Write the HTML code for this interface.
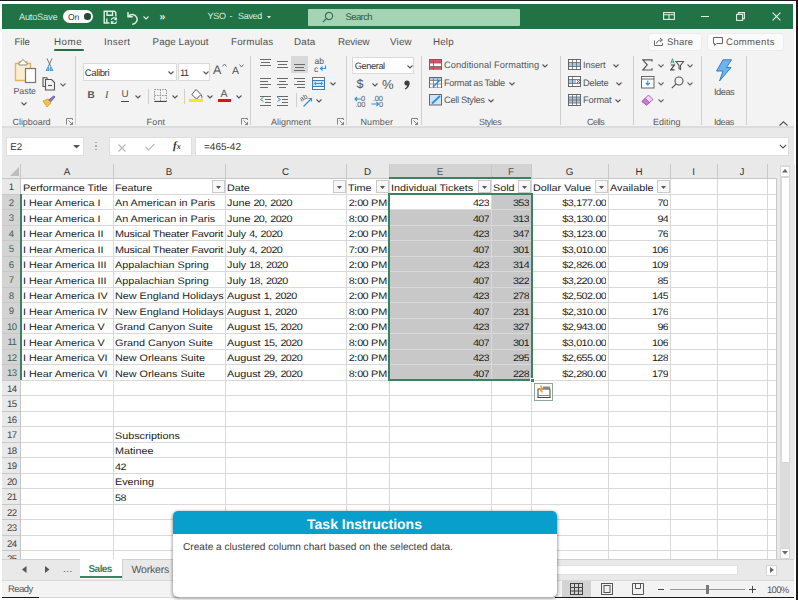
<!DOCTYPE html><html><head><meta charset="utf-8"><style>
*{margin:0;padding:0;box-sizing:border-box}
html,body{width:798px;height:600px;overflow:hidden;background:#fff;font-family:"Liberation Sans",sans-serif;text-rendering:geometricPrecision}
.a{position:absolute}
.t{position:absolute;white-space:nowrap;line-height:1}
.cell{position:absolute;white-space:nowrap;line-height:15px;height:15px;font-size:10.8px;color:#1c1c1c;overflow:hidden;transform:scaleY(0.87);transform-origin:0 11.24px}
.rib{color:#3b3b3b}
</style></head><body>
<div class="a" style="left:0;top:0;width:798px;height:600px;background:#fff"></div>
<div class="a" style="left:2px;top:4px;width:791px;height:25px;background:#217346"></div>
<div class="a" style="left:2px;top:29.5px;width:792px;height:97px;background:#f3f3f3"></div>
<div class="a" style="left:2px;top:126.5px;width:792px;height:38px;background:#e9e9e9"></div>
<div class="a" style="left:2px;top:126px;width:792px;height:1.5px;background:#dcdcdc"></div>
<div class="a" style="left:5.5px;top:136.5px;width:78.5px;height:19px;background:#fff;border:1px solid #dedede"></div>
<div class="t" style="left:10.3px;top:142.5px;font-size:9.8px;color:#333">E2</div>
<svg class="a" style="left:73px;top:144.5px" width="7" height="4"><path d="M0 0H7L3.5 3.5Z" fill="#555"/></svg>
<div class="a" style="left:95px;top:141.5px;width:1.5px;height:1.5px;background:#aaa"></div>
<div class="a" style="left:95px;top:145.0px;width:1.5px;height:1.5px;background:#aaa"></div>
<div class="a" style="left:95px;top:148.5px;width:1.5px;height:1.5px;background:#aaa"></div>
<div class="a" style="left:108.5px;top:136.5px;width:83.5px;height:19px;background:#fff;border:1px solid #dedede"></div>
<svg class="a" style="left:118px;top:143.5px" width="8" height="8"><path d="M0.5 0.5L7.5 7.5M7.5 0.5L0.5 7.5" stroke="#b5b5b5" stroke-width="1.1"/></svg>
<svg class="a" style="left:145px;top:143px" width="10" height="8"><path d="M0.5 4L3.5 7L9.5 0.8" fill="none" stroke="#b5b5b5" stroke-width="1.1"/></svg>
<div class="t" style="left:173px;top:140.5px;font-size:11px;color:#333;font-family:&quot;Liberation Serif&quot;;font-style:italic;font-weight:bold">f<span style="font-size:8px">x</span></div>
<div class="a" style="left:195px;top:136.5px;width:594px;height:19px;background:#fff;border:1px solid #dedede"></div>
<div class="t" style="left:204px;top:142.5px;font-size:10px;color:#333;letter-spacing:0px">=465-42</div>
<svg class="a" style="left:779px;top:143.5px" width="8" height="5"><path d="M0.8 0.8L4 4L7.2 0.8" fill="none" stroke="#555" stroke-width="1.2"/></svg>
<div class="a" style="left:2px;top:164px;width:775px;height:14.5px;background:#e9e9e9"></div>
<div class="a" style="left:2px;top:178.5px;width:19px;height:380.5px;background:#e9e9e9"></div>
<div class="a" style="left:2px;top:194.0px;width:19px;height:186.0px;background:#d3d3d3"></div>
<div class="a" style="left:389px;top:164px;width:142px;height:14.5px;background:#d3d3d3"></div>
<div class="a" style="left:21px;top:178.5px;width:756px;height:380.5px;background:#fff"></div>
<div class="a" style="left:389px;top:194.0px;width:142px;height:186.0px;background:#c8c8c8"></div>
<div class="a" style="left:389px;top:194.0px;width:102px;height:15.5px;background:#fff"></div>
<div class="a" style="left:21px;top:193.5px;width:756px;height:1px;background:#d9d9d9"></div>
<div class="a" style="left:2px;top:193.5px;width:19px;height:1px;background:#c8c8c8"></div>
<div class="a" style="left:21px;top:209.0px;width:756px;height:1px;background:#d9d9d9"></div>
<div class="a" style="left:2px;top:209.0px;width:19px;height:1px;background:#c8c8c8"></div>
<div class="a" style="left:21px;top:224.5px;width:756px;height:1px;background:#d9d9d9"></div>
<div class="a" style="left:2px;top:224.5px;width:19px;height:1px;background:#c8c8c8"></div>
<div class="a" style="left:21px;top:240.0px;width:756px;height:1px;background:#d9d9d9"></div>
<div class="a" style="left:2px;top:240.0px;width:19px;height:1px;background:#c8c8c8"></div>
<div class="a" style="left:21px;top:255.5px;width:756px;height:1px;background:#d9d9d9"></div>
<div class="a" style="left:2px;top:255.5px;width:19px;height:1px;background:#c8c8c8"></div>
<div class="a" style="left:21px;top:271.0px;width:756px;height:1px;background:#d9d9d9"></div>
<div class="a" style="left:2px;top:271.0px;width:19px;height:1px;background:#c8c8c8"></div>
<div class="a" style="left:21px;top:286.5px;width:756px;height:1px;background:#d9d9d9"></div>
<div class="a" style="left:2px;top:286.5px;width:19px;height:1px;background:#c8c8c8"></div>
<div class="a" style="left:21px;top:302.0px;width:756px;height:1px;background:#d9d9d9"></div>
<div class="a" style="left:2px;top:302.0px;width:19px;height:1px;background:#c8c8c8"></div>
<div class="a" style="left:21px;top:317.5px;width:756px;height:1px;background:#d9d9d9"></div>
<div class="a" style="left:2px;top:317.5px;width:19px;height:1px;background:#c8c8c8"></div>
<div class="a" style="left:21px;top:333.0px;width:756px;height:1px;background:#d9d9d9"></div>
<div class="a" style="left:2px;top:333.0px;width:19px;height:1px;background:#c8c8c8"></div>
<div class="a" style="left:21px;top:348.5px;width:756px;height:1px;background:#d9d9d9"></div>
<div class="a" style="left:2px;top:348.5px;width:19px;height:1px;background:#c8c8c8"></div>
<div class="a" style="left:21px;top:364.0px;width:756px;height:1px;background:#d9d9d9"></div>
<div class="a" style="left:2px;top:364.0px;width:19px;height:1px;background:#c8c8c8"></div>
<div class="a" style="left:21px;top:379.5px;width:756px;height:1px;background:#d9d9d9"></div>
<div class="a" style="left:2px;top:379.5px;width:19px;height:1px;background:#c8c8c8"></div>
<div class="a" style="left:21px;top:395.0px;width:756px;height:1px;background:#d9d9d9"></div>
<div class="a" style="left:2px;top:395.0px;width:19px;height:1px;background:#c8c8c8"></div>
<div class="a" style="left:21px;top:410.5px;width:756px;height:1px;background:#d9d9d9"></div>
<div class="a" style="left:2px;top:410.5px;width:19px;height:1px;background:#c8c8c8"></div>
<div class="a" style="left:21px;top:426.0px;width:756px;height:1px;background:#d9d9d9"></div>
<div class="a" style="left:2px;top:426.0px;width:19px;height:1px;background:#c8c8c8"></div>
<div class="a" style="left:21px;top:441.5px;width:756px;height:1px;background:#d9d9d9"></div>
<div class="a" style="left:2px;top:441.5px;width:19px;height:1px;background:#c8c8c8"></div>
<div class="a" style="left:21px;top:457.0px;width:756px;height:1px;background:#d9d9d9"></div>
<div class="a" style="left:2px;top:457.0px;width:19px;height:1px;background:#c8c8c8"></div>
<div class="a" style="left:21px;top:472.5px;width:756px;height:1px;background:#d9d9d9"></div>
<div class="a" style="left:2px;top:472.5px;width:19px;height:1px;background:#c8c8c8"></div>
<div class="a" style="left:21px;top:488.0px;width:756px;height:1px;background:#d9d9d9"></div>
<div class="a" style="left:2px;top:488.0px;width:19px;height:1px;background:#c8c8c8"></div>
<div class="a" style="left:21px;top:503.5px;width:756px;height:1px;background:#d9d9d9"></div>
<div class="a" style="left:2px;top:503.5px;width:19px;height:1px;background:#c8c8c8"></div>
<div class="a" style="left:21px;top:519.0px;width:756px;height:1px;background:#d9d9d9"></div>
<div class="a" style="left:2px;top:519.0px;width:19px;height:1px;background:#c8c8c8"></div>
<div class="a" style="left:21px;top:534.5px;width:756px;height:1px;background:#d9d9d9"></div>
<div class="a" style="left:2px;top:534.5px;width:19px;height:1px;background:#c8c8c8"></div>
<div class="a" style="left:21px;top:550.0px;width:756px;height:1px;background:#d9d9d9"></div>
<div class="a" style="left:2px;top:550.0px;width:19px;height:1px;background:#c8c8c8"></div>
<div class="a" style="left:112.5px;top:178.5px;width:1px;height:380.5px;background:#d9d9d9"></div>
<div class="a" style="left:112.5px;top:164px;width:1px;height:14.5px;background:#c8c8c8"></div>
<div class="a" style="left:224.5px;top:178.5px;width:1px;height:380.5px;background:#d9d9d9"></div>
<div class="a" style="left:224.5px;top:164px;width:1px;height:14.5px;background:#c8c8c8"></div>
<div class="a" style="left:345.5px;top:178.5px;width:1px;height:380.5px;background:#d9d9d9"></div>
<div class="a" style="left:345.5px;top:164px;width:1px;height:14.5px;background:#c8c8c8"></div>
<div class="a" style="left:388.5px;top:178.5px;width:1px;height:380.5px;background:#d9d9d9"></div>
<div class="a" style="left:388.5px;top:164px;width:1px;height:14.5px;background:#c8c8c8"></div>
<div class="a" style="left:490.5px;top:178.5px;width:1px;height:380.5px;background:#d9d9d9"></div>
<div class="a" style="left:490.5px;top:164px;width:1px;height:14.5px;background:#c8c8c8"></div>
<div class="a" style="left:530.5px;top:178.5px;width:1px;height:380.5px;background:#d9d9d9"></div>
<div class="a" style="left:530.5px;top:164px;width:1px;height:14.5px;background:#c8c8c8"></div>
<div class="a" style="left:607.5px;top:178.5px;width:1px;height:380.5px;background:#d9d9d9"></div>
<div class="a" style="left:607.5px;top:164px;width:1px;height:14.5px;background:#c8c8c8"></div>
<div class="a" style="left:669.5px;top:178.5px;width:1px;height:380.5px;background:#d9d9d9"></div>
<div class="a" style="left:669.5px;top:164px;width:1px;height:14.5px;background:#c8c8c8"></div>
<div class="a" style="left:716.5px;top:178.5px;width:1px;height:380.5px;background:#d9d9d9"></div>
<div class="a" style="left:716.5px;top:164px;width:1px;height:14.5px;background:#c8c8c8"></div>
<div class="a" style="left:766.5px;top:178.5px;width:1px;height:380.5px;background:#d9d9d9"></div>
<div class="a" style="left:766.5px;top:164px;width:1px;height:14.5px;background:#c8c8c8"></div>
<div class="a" style="left:2px;top:177.5px;width:775px;height:1.5px;background:#c6c6c6"></div>
<div class="a" style="left:389px;top:177px;width:142px;height:2px;background:#3a8360"></div>
<div class="a" style="left:20px;top:164px;width:1px;height:395px;background:#c6c6c6"></div>
<div class="a" style="left:20px;top:194.0px;width:1.5px;height:186.0px;background:#3a8360"></div>
<svg class="a" style="left:9px;top:167px" width="11" height="10"><path d="M10 0 L10 9 L1 9 Z" fill="#bdbdbd"/></svg>
<div class="t" style="left:21px;width:92px;top:167.5px;font-size:9.8px;text-align:center;color:#333;font-weight:normal">A</div>
<div class="t" style="left:113px;width:112px;top:167.5px;font-size:9.8px;text-align:center;color:#333;font-weight:normal">B</div>
<div class="t" style="left:225px;width:121px;top:167.5px;font-size:9.8px;text-align:center;color:#333;font-weight:normal">C</div>
<div class="t" style="left:346px;width:43px;top:167.5px;font-size:9.8px;text-align:center;color:#333;font-weight:normal">D</div>
<div class="t" style="left:389px;width:102px;top:167.5px;font-size:9.8px;text-align:center;color:#555;font-weight:normal">E</div>
<div class="t" style="left:491px;width:40px;top:167.5px;font-size:9.8px;text-align:center;color:#555;font-weight:normal">F</div>
<div class="t" style="left:531px;width:77px;top:167.5px;font-size:9.8px;text-align:center;color:#333;font-weight:normal">G</div>
<div class="t" style="left:608px;width:62px;top:167.5px;font-size:9.8px;text-align:center;color:#333;font-weight:normal">H</div>
<div class="t" style="left:670px;width:47px;top:167.5px;font-size:9.8px;text-align:center;color:#333;font-weight:normal">I</div>
<div class="t" style="left:717px;width:50px;top:167.5px;font-size:9.8px;text-align:center;color:#333;font-weight:normal">J</div>
<div class="t" style="left:767px;width:33px;top:167.5px;font-size:9.8px;text-align:center;color:#333;font-weight:normal">K</div>
<div class="t" style="left:2px;width:19px;top:183.3px;font-size:9.6px;text-align:center;color:#444;overflow:hidden;height:12px;letter-spacing:0px;text-indent:0px">1</div>
<div class="t" style="left:2px;width:19px;top:198.8px;font-size:9.6px;text-align:center;color:#3f5f4c;overflow:hidden;height:12px;letter-spacing:0px;text-indent:0px">2</div>
<div class="t" style="left:2px;width:19px;top:214.3px;font-size:9.6px;text-align:center;color:#3f5f4c;overflow:hidden;height:12px;letter-spacing:0px;text-indent:0px">3</div>
<div class="t" style="left:2px;width:19px;top:229.8px;font-size:9.6px;text-align:center;color:#3f5f4c;overflow:hidden;height:12px;letter-spacing:0px;text-indent:0px">4</div>
<div class="t" style="left:2px;width:19px;top:245.3px;font-size:9.6px;text-align:center;color:#3f5f4c;overflow:hidden;height:12px;letter-spacing:0px;text-indent:0px">5</div>
<div class="t" style="left:2px;width:19px;top:260.8px;font-size:9.6px;text-align:center;color:#3f5f4c;overflow:hidden;height:12px;letter-spacing:0px;text-indent:0px">6</div>
<div class="t" style="left:2px;width:19px;top:276.3px;font-size:9.6px;text-align:center;color:#3f5f4c;overflow:hidden;height:12px;letter-spacing:0px;text-indent:0px">7</div>
<div class="t" style="left:2px;width:19px;top:291.8px;font-size:9.6px;text-align:center;color:#3f5f4c;overflow:hidden;height:12px;letter-spacing:0px;text-indent:0px">8</div>
<div class="t" style="left:2px;width:19px;top:307.3px;font-size:9.6px;text-align:center;color:#3f5f4c;overflow:hidden;height:12px;letter-spacing:0px;text-indent:0px">9</div>
<div class="t" style="left:2px;width:19px;top:322.8px;font-size:9.6px;text-align:center;color:#3f5f4c;overflow:hidden;height:12px;letter-spacing:-0.6px;text-indent:0.6px">10</div>
<div class="t" style="left:2px;width:19px;top:338.3px;font-size:9.6px;text-align:center;color:#3f5f4c;overflow:hidden;height:12px;letter-spacing:-0.6px;text-indent:0.6px">11</div>
<div class="t" style="left:2px;width:19px;top:353.8px;font-size:9.6px;text-align:center;color:#3f5f4c;overflow:hidden;height:12px;letter-spacing:-0.6px;text-indent:0.6px">12</div>
<div class="t" style="left:2px;width:19px;top:369.3px;font-size:9.6px;text-align:center;color:#3f5f4c;overflow:hidden;height:12px;letter-spacing:-0.6px;text-indent:0.6px">13</div>
<div class="t" style="left:2px;width:19px;top:384.8px;font-size:9.6px;text-align:center;color:#444;overflow:hidden;height:12px;letter-spacing:-0.6px;text-indent:0.6px">14</div>
<div class="t" style="left:2px;width:19px;top:400.3px;font-size:9.6px;text-align:center;color:#444;overflow:hidden;height:12px;letter-spacing:-0.6px;text-indent:0.6px">15</div>
<div class="t" style="left:2px;width:19px;top:415.8px;font-size:9.6px;text-align:center;color:#444;overflow:hidden;height:12px;letter-spacing:-0.6px;text-indent:0.6px">16</div>
<div class="t" style="left:2px;width:19px;top:431.3px;font-size:9.6px;text-align:center;color:#444;overflow:hidden;height:12px;letter-spacing:-0.6px;text-indent:0.6px">17</div>
<div class="t" style="left:2px;width:19px;top:446.8px;font-size:9.6px;text-align:center;color:#444;overflow:hidden;height:12px;letter-spacing:-0.6px;text-indent:0.6px">18</div>
<div class="t" style="left:2px;width:19px;top:462.3px;font-size:9.6px;text-align:center;color:#444;overflow:hidden;height:12px;letter-spacing:-0.6px;text-indent:0.6px">19</div>
<div class="t" style="left:2px;width:19px;top:477.8px;font-size:9.6px;text-align:center;color:#444;overflow:hidden;height:12px;letter-spacing:-0.6px;text-indent:0.6px">20</div>
<div class="t" style="left:2px;width:19px;top:493.3px;font-size:9.6px;text-align:center;color:#444;overflow:hidden;height:12px;letter-spacing:-0.6px;text-indent:0.6px">21</div>
<div class="t" style="left:2px;width:19px;top:508.8px;font-size:9.6px;text-align:center;color:#444;overflow:hidden;height:12px;letter-spacing:-0.6px;text-indent:0.6px">22</div>
<div class="t" style="left:2px;width:19px;top:524.3px;font-size:9.6px;text-align:center;color:#444;overflow:hidden;height:12px;letter-spacing:-0.6px;text-indent:0.6px">23</div>
<div class="t" style="left:2px;width:19px;top:539.8px;font-size:9.6px;text-align:center;color:#444;overflow:hidden;height:12px;letter-spacing:-0.6px;text-indent:0.6px">24</div>
<div class="t" style="left:2px;width:19px;top:555.3px;font-size:9.6px;text-align:center;color:#444;overflow:hidden;height:3.7px;letter-spacing:-0.6px;text-indent:0.6px">25</div>
<div class="cell" style="left:23px;width:89.5px;top:180.6px">Performance Title</div>
<div class="cell" style="left:115px;width:109.5px;top:180.6px">Feature</div>
<div class="cell" style="left:227px;width:118.5px;top:180.6px">Date</div>
<div class="cell" style="left:348px;width:40.5px;top:180.6px">Time</div>
<div class="cell" style="left:391px;width:99.5px;top:180.6px">Individual Tickets</div>
<div class="cell" style="left:493px;width:37.5px;top:180.6px">Sold</div>
<div class="cell" style="left:533px;width:74.5px;top:180.6px">Dollar Value</div>
<div class="cell" style="left:610px;width:59.5px;top:180.6px">Available</div>
<div class="cell" style="left:23px;width:89.5px;top:196.1px">I Hear America I</div>
<div class="cell" style="left:115px;width:109.5px;top:196.1px">An American in Paris</div>
<div class="cell" style="left:227px;width:118.5px;top:196.1px">June <span style="letter-spacing:-0.6px">20</span>, <span style="letter-spacing:-0.6px">2020</span></div>
<div class="cell" style="left:346px;width:41.2px;top:196.1px;text-align:right"><span style="letter-spacing:-0.6px">2</span>:<span style="letter-spacing:-0.6px">00</span> PM</div>
<div class="cell" style="left:389px;width:100.2px;top:196.1px;text-align:right"><span style="letter-spacing:-0.6px">423</span></div>
<div class="cell" style="left:491px;width:38.2px;top:196.1px;text-align:right"><span style="letter-spacing:-0.6px">353</span></div>
<div class="cell" style="left:531px;width:75.2px;top:196.1px;text-align:right"><span style="letter-spacing:-0.6px">$3</span>,<span style="letter-spacing:-0.6px">177</span>.<span style="letter-spacing:-0.6px">00</span></div>
<div class="cell" style="left:608px;width:60.2px;top:196.1px;text-align:right"><span style="letter-spacing:-0.6px">70</span></div>
<div class="cell" style="left:23px;width:89.5px;top:211.6px">I Hear America I</div>
<div class="cell" style="left:115px;width:109.5px;top:211.6px">An American in Paris</div>
<div class="cell" style="left:227px;width:118.5px;top:211.6px">June <span style="letter-spacing:-0.6px">20</span>, <span style="letter-spacing:-0.6px">2020</span></div>
<div class="cell" style="left:346px;width:41.2px;top:211.6px;text-align:right"><span style="letter-spacing:-0.6px">8</span>:<span style="letter-spacing:-0.6px">00</span> PM</div>
<div class="cell" style="left:389px;width:100.2px;top:211.6px;text-align:right"><span style="letter-spacing:-0.6px">407</span></div>
<div class="cell" style="left:491px;width:38.2px;top:211.6px;text-align:right"><span style="letter-spacing:-0.6px">313</span></div>
<div class="cell" style="left:531px;width:75.2px;top:211.6px;text-align:right"><span style="letter-spacing:-0.6px">$3</span>,<span style="letter-spacing:-0.6px">130</span>.<span style="letter-spacing:-0.6px">00</span></div>
<div class="cell" style="left:608px;width:60.2px;top:211.6px;text-align:right"><span style="letter-spacing:-0.6px">94</span></div>
<div class="cell" style="left:23px;width:89.5px;top:227.1px">I Hear America II</div>
<div class="cell" style="left:115px;width:109.5px;top:227.1px"><span style="letter-spacing:-0.2px">Musical Theater Favorit</span></div>
<div class="cell" style="left:227px;width:118.5px;top:227.1px">July <span style="letter-spacing:-0.6px">4</span>, <span style="letter-spacing:-0.6px">2020</span></div>
<div class="cell" style="left:346px;width:41.2px;top:227.1px;text-align:right"><span style="letter-spacing:-0.6px">2</span>:<span style="letter-spacing:-0.6px">00</span> PM</div>
<div class="cell" style="left:389px;width:100.2px;top:227.1px;text-align:right"><span style="letter-spacing:-0.6px">423</span></div>
<div class="cell" style="left:491px;width:38.2px;top:227.1px;text-align:right"><span style="letter-spacing:-0.6px">347</span></div>
<div class="cell" style="left:531px;width:75.2px;top:227.1px;text-align:right"><span style="letter-spacing:-0.6px">$3</span>,<span style="letter-spacing:-0.6px">123</span>.<span style="letter-spacing:-0.6px">00</span></div>
<div class="cell" style="left:608px;width:60.2px;top:227.1px;text-align:right"><span style="letter-spacing:-0.6px">76</span></div>
<div class="cell" style="left:23px;width:89.5px;top:242.6px">I Hear America II</div>
<div class="cell" style="left:115px;width:109.5px;top:242.6px"><span style="letter-spacing:-0.2px">Musical Theater Favorit</span></div>
<div class="cell" style="left:227px;width:118.5px;top:242.6px">July <span style="letter-spacing:-0.6px">4</span>, <span style="letter-spacing:-0.6px">2020</span></div>
<div class="cell" style="left:346px;width:41.2px;top:242.6px;text-align:right"><span style="letter-spacing:-0.6px">7</span>:<span style="letter-spacing:-0.6px">00</span> PM</div>
<div class="cell" style="left:389px;width:100.2px;top:242.6px;text-align:right"><span style="letter-spacing:-0.6px">407</span></div>
<div class="cell" style="left:491px;width:38.2px;top:242.6px;text-align:right"><span style="letter-spacing:-0.6px">301</span></div>
<div class="cell" style="left:531px;width:75.2px;top:242.6px;text-align:right"><span style="letter-spacing:-0.6px">$3</span>,<span style="letter-spacing:-0.6px">010</span>.<span style="letter-spacing:-0.6px">00</span></div>
<div class="cell" style="left:608px;width:60.2px;top:242.6px;text-align:right"><span style="letter-spacing:-0.6px">106</span></div>
<div class="cell" style="left:23px;width:89.5px;top:258.1px">I Hear America III</div>
<div class="cell" style="left:115px;width:109.5px;top:258.1px">Appalachian Spring</div>
<div class="cell" style="left:227px;width:118.5px;top:258.1px">July <span style="letter-spacing:-0.6px">18</span>, <span style="letter-spacing:-0.6px">2020</span></div>
<div class="cell" style="left:346px;width:41.2px;top:258.1px;text-align:right"><span style="letter-spacing:-0.6px">2</span>:<span style="letter-spacing:-0.6px">00</span> PM</div>
<div class="cell" style="left:389px;width:100.2px;top:258.1px;text-align:right"><span style="letter-spacing:-0.6px">423</span></div>
<div class="cell" style="left:491px;width:38.2px;top:258.1px;text-align:right"><span style="letter-spacing:-0.6px">314</span></div>
<div class="cell" style="left:531px;width:75.2px;top:258.1px;text-align:right"><span style="letter-spacing:-0.6px">$2</span>,<span style="letter-spacing:-0.6px">826</span>.<span style="letter-spacing:-0.6px">00</span></div>
<div class="cell" style="left:608px;width:60.2px;top:258.1px;text-align:right"><span style="letter-spacing:-0.6px">109</span></div>
<div class="cell" style="left:23px;width:89.5px;top:273.6px">I Hear America III</div>
<div class="cell" style="left:115px;width:109.5px;top:273.6px">Appalachian Spring</div>
<div class="cell" style="left:227px;width:118.5px;top:273.6px">July <span style="letter-spacing:-0.6px">18</span>, <span style="letter-spacing:-0.6px">2020</span></div>
<div class="cell" style="left:346px;width:41.2px;top:273.6px;text-align:right"><span style="letter-spacing:-0.6px">8</span>:<span style="letter-spacing:-0.6px">00</span> PM</div>
<div class="cell" style="left:389px;width:100.2px;top:273.6px;text-align:right"><span style="letter-spacing:-0.6px">407</span></div>
<div class="cell" style="left:491px;width:38.2px;top:273.6px;text-align:right"><span style="letter-spacing:-0.6px">322</span></div>
<div class="cell" style="left:531px;width:75.2px;top:273.6px;text-align:right"><span style="letter-spacing:-0.6px">$3</span>,<span style="letter-spacing:-0.6px">220</span>.<span style="letter-spacing:-0.6px">00</span></div>
<div class="cell" style="left:608px;width:60.2px;top:273.6px;text-align:right"><span style="letter-spacing:-0.6px">85</span></div>
<div class="cell" style="left:23px;width:89.5px;top:289.1px">I Hear America IV</div>
<div class="cell" style="left:115px;width:109.5px;top:289.1px">New England Holidays</div>
<div class="cell" style="left:227px;width:118.5px;top:289.1px">August <span style="letter-spacing:-0.6px">1</span>, <span style="letter-spacing:-0.6px">2020</span></div>
<div class="cell" style="left:346px;width:41.2px;top:289.1px;text-align:right"><span style="letter-spacing:-0.6px">2</span>:<span style="letter-spacing:-0.6px">00</span> PM</div>
<div class="cell" style="left:389px;width:100.2px;top:289.1px;text-align:right"><span style="letter-spacing:-0.6px">423</span></div>
<div class="cell" style="left:491px;width:38.2px;top:289.1px;text-align:right"><span style="letter-spacing:-0.6px">278</span></div>
<div class="cell" style="left:531px;width:75.2px;top:289.1px;text-align:right"><span style="letter-spacing:-0.6px">$2</span>,<span style="letter-spacing:-0.6px">502</span>.<span style="letter-spacing:-0.6px">00</span></div>
<div class="cell" style="left:608px;width:60.2px;top:289.1px;text-align:right"><span style="letter-spacing:-0.6px">145</span></div>
<div class="cell" style="left:23px;width:89.5px;top:304.6px">I Hear America IV</div>
<div class="cell" style="left:115px;width:109.5px;top:304.6px">New England Holidays</div>
<div class="cell" style="left:227px;width:118.5px;top:304.6px">August <span style="letter-spacing:-0.6px">1</span>, <span style="letter-spacing:-0.6px">2020</span></div>
<div class="cell" style="left:346px;width:41.2px;top:304.6px;text-align:right"><span style="letter-spacing:-0.6px">8</span>:<span style="letter-spacing:-0.6px">00</span> PM</div>
<div class="cell" style="left:389px;width:100.2px;top:304.6px;text-align:right"><span style="letter-spacing:-0.6px">407</span></div>
<div class="cell" style="left:491px;width:38.2px;top:304.6px;text-align:right"><span style="letter-spacing:-0.6px">231</span></div>
<div class="cell" style="left:531px;width:75.2px;top:304.6px;text-align:right"><span style="letter-spacing:-0.6px">$2</span>,<span style="letter-spacing:-0.6px">310</span>.<span style="letter-spacing:-0.6px">00</span></div>
<div class="cell" style="left:608px;width:60.2px;top:304.6px;text-align:right"><span style="letter-spacing:-0.6px">176</span></div>
<div class="cell" style="left:23px;width:89.5px;top:320.1px">I Hear America V</div>
<div class="cell" style="left:115px;width:109.5px;top:320.1px">Grand Canyon Suite</div>
<div class="cell" style="left:227px;width:118.5px;top:320.1px">August <span style="letter-spacing:-0.6px">15</span>, <span style="letter-spacing:-0.6px">2020</span></div>
<div class="cell" style="left:346px;width:41.2px;top:320.1px;text-align:right"><span style="letter-spacing:-0.6px">2</span>:<span style="letter-spacing:-0.6px">00</span> PM</div>
<div class="cell" style="left:389px;width:100.2px;top:320.1px;text-align:right"><span style="letter-spacing:-0.6px">423</span></div>
<div class="cell" style="left:491px;width:38.2px;top:320.1px;text-align:right"><span style="letter-spacing:-0.6px">327</span></div>
<div class="cell" style="left:531px;width:75.2px;top:320.1px;text-align:right"><span style="letter-spacing:-0.6px">$2</span>,<span style="letter-spacing:-0.6px">943</span>.<span style="letter-spacing:-0.6px">00</span></div>
<div class="cell" style="left:608px;width:60.2px;top:320.1px;text-align:right"><span style="letter-spacing:-0.6px">96</span></div>
<div class="cell" style="left:23px;width:89.5px;top:335.6px">I Hear America V</div>
<div class="cell" style="left:115px;width:109.5px;top:335.6px">Grand Canyon Suite</div>
<div class="cell" style="left:227px;width:118.5px;top:335.6px">August <span style="letter-spacing:-0.6px">15</span>, <span style="letter-spacing:-0.6px">2020</span></div>
<div class="cell" style="left:346px;width:41.2px;top:335.6px;text-align:right"><span style="letter-spacing:-0.6px">8</span>:<span style="letter-spacing:-0.6px">00</span> PM</div>
<div class="cell" style="left:389px;width:100.2px;top:335.6px;text-align:right"><span style="letter-spacing:-0.6px">407</span></div>
<div class="cell" style="left:491px;width:38.2px;top:335.6px;text-align:right"><span style="letter-spacing:-0.6px">301</span></div>
<div class="cell" style="left:531px;width:75.2px;top:335.6px;text-align:right"><span style="letter-spacing:-0.6px">$3</span>,<span style="letter-spacing:-0.6px">010</span>.<span style="letter-spacing:-0.6px">00</span></div>
<div class="cell" style="left:608px;width:60.2px;top:335.6px;text-align:right"><span style="letter-spacing:-0.6px">106</span></div>
<div class="cell" style="left:23px;width:89.5px;top:351.1px">I Hear America VI</div>
<div class="cell" style="left:115px;width:109.5px;top:351.1px">New Orleans Suite</div>
<div class="cell" style="left:227px;width:118.5px;top:351.1px">August <span style="letter-spacing:-0.6px">29</span>, <span style="letter-spacing:-0.6px">2020</span></div>
<div class="cell" style="left:346px;width:41.2px;top:351.1px;text-align:right"><span style="letter-spacing:-0.6px">2</span>:<span style="letter-spacing:-0.6px">00</span> PM</div>
<div class="cell" style="left:389px;width:100.2px;top:351.1px;text-align:right"><span style="letter-spacing:-0.6px">423</span></div>
<div class="cell" style="left:491px;width:38.2px;top:351.1px;text-align:right"><span style="letter-spacing:-0.6px">295</span></div>
<div class="cell" style="left:531px;width:75.2px;top:351.1px;text-align:right"><span style="letter-spacing:-0.6px">$2</span>,<span style="letter-spacing:-0.6px">655</span>.<span style="letter-spacing:-0.6px">00</span></div>
<div class="cell" style="left:608px;width:60.2px;top:351.1px;text-align:right"><span style="letter-spacing:-0.6px">128</span></div>
<div class="cell" style="left:23px;width:89.5px;top:366.6px">I Hear America VI</div>
<div class="cell" style="left:115px;width:109.5px;top:366.6px">New Orleans Suite</div>
<div class="cell" style="left:227px;width:118.5px;top:366.6px">August <span style="letter-spacing:-0.6px">29</span>, <span style="letter-spacing:-0.6px">2020</span></div>
<div class="cell" style="left:346px;width:41.2px;top:366.6px;text-align:right"><span style="letter-spacing:-0.6px">8</span>:<span style="letter-spacing:-0.6px">00</span> PM</div>
<div class="cell" style="left:389px;width:100.2px;top:366.6px;text-align:right"><span style="letter-spacing:-0.6px">407</span></div>
<div class="cell" style="left:491px;width:38.2px;top:366.6px;text-align:right"><span style="letter-spacing:-0.6px">228</span></div>
<div class="cell" style="left:531px;width:75.2px;top:366.6px;text-align:right"><span style="letter-spacing:-0.6px">$2</span>,<span style="letter-spacing:-0.6px">280</span>.<span style="letter-spacing:-0.6px">00</span></div>
<div class="cell" style="left:608px;width:60.2px;top:366.6px;text-align:right"><span style="letter-spacing:-0.6px">179</span></div>
<div class="cell" style="left:115px;width:109.5px;top:428.6px">Subscriptions</div>
<div class="cell" style="left:115px;width:109.5px;top:444.1px">Matinee</div>
<div class="cell" style="left:115px;width:109.5px;top:459.6px"><span style="letter-spacing:-0.6px">42</span></div>
<div class="cell" style="left:115px;width:109.5px;top:475.1px">Evening</div>
<div class="cell" style="left:115px;width:109.5px;top:490.6px"><span style="letter-spacing:-0.6px">58</span></div>
<div class="a" style="left:211.5px;top:180px;width:13px;height:12.5px;background:#f7f7f7;border:1px solid #c9c9c9"></div>
<svg class="a" style="left:215.8px;top:185.5px" width="6" height="4"><path d="M0 0 L5 0 L2.5 3Z" fill="#555"/></svg>
<div class="a" style="left:332.5px;top:180px;width:13px;height:12.5px;background:#f7f7f7;border:1px solid #c9c9c9"></div>
<svg class="a" style="left:336.8px;top:185.5px" width="6" height="4"><path d="M0 0 L5 0 L2.5 3Z" fill="#555"/></svg>
<div class="a" style="left:375.5px;top:180px;width:13px;height:12.5px;background:#f7f7f7;border:1px solid #c9c9c9"></div>
<svg class="a" style="left:379.8px;top:185.5px" width="6" height="4"><path d="M0 0 L5 0 L2.5 3Z" fill="#555"/></svg>
<div class="a" style="left:477.5px;top:180px;width:13px;height:12.5px;background:#f7f7f7;border:1px solid #c9c9c9"></div>
<svg class="a" style="left:481.8px;top:185.5px" width="6" height="4"><path d="M0 0 L5 0 L2.5 3Z" fill="#555"/></svg>
<div class="a" style="left:517.5px;top:180px;width:13px;height:12.5px;background:#f7f7f7;border:1px solid #c9c9c9"></div>
<svg class="a" style="left:521.8px;top:185.5px" width="6" height="4"><path d="M0 0 L5 0 L2.5 3Z" fill="#555"/></svg>
<div class="a" style="left:594.5px;top:180px;width:13px;height:12.5px;background:#f7f7f7;border:1px solid #c9c9c9"></div>
<svg class="a" style="left:598.8px;top:185.5px" width="6" height="4"><path d="M0 0 L5 0 L2.5 3Z" fill="#555"/></svg>
<div class="a" style="left:656.5px;top:180px;width:13px;height:12.5px;background:#f7f7f7;border:1px solid #c9c9c9"></div>
<svg class="a" style="left:660.8px;top:185.5px" width="6" height="4"><path d="M0 0 L5 0 L2.5 3Z" fill="#555"/></svg>
<div class="a" style="left:388px;top:193.0px;width:144.5px;height:188.0px;border:2px solid #3a8360"></div>
<div class="a" style="left:529.5px;top:378px;width:5px;height:5px;background:#3a8360;border:1px solid #fff"></div>
<div class="a" style="left:534px;top:383px;width:19px;height:18px;background:#fff;border:1px solid #8aa897"></div>
<svg class="a" style="left:537px;top:385px" width="14" height="14"><rect x="1" y="4" width="12" height="8.5" fill="#fff" stroke="#444" stroke-width="1"/><rect x="6" y="1.5" width="7" height="2.5" fill="#888"/><path d="M1 10.5H13" stroke="#888" stroke-width="1"/><path d="M3.5 0.5L5 3.5L3 4.5L5.5 7.5" fill="none" stroke="#f0a030" stroke-width="1.6"/></svg>
<div class="a" style="left:777px;top:164px;width:18px;height:395px;background:#e9e9e9"></div>
<div class="a" style="left:780px;top:165px;width:10px;height:394px;background:#dcdcdc"></div>
<div class="a" style="left:780.5px;top:177px;width:9.5px;height:286px;background:#fff;border:1px solid #d8d8d8"></div>
<div class="a" style="left:776px;top:178px;width:1px;height:381px;background:#c8c8c8"></div>
<div class="a" style="left:780px;top:165.5px;width:10px;height:11.5px;background:#fff;border:1px solid #d6d6d6"></div>
<svg class="a" style="left:782px;top:169px" width="6" height="4"><path d="M0 3.5 L6 3.5 L3 0Z" fill="#666"/></svg>
<div class="a" style="left:780px;top:547.5px;width:10px;height:11px;background:#fff;border:1px solid #d6d6d6"></div>
<svg class="a" style="left:782px;top:551px" width="6" height="4"><path d="M0 0 L6 0 L3 3.5Z" fill="#666"/></svg>
<div class="a" style="left:2px;top:559px;width:792px;height:21px;background:#e9e9e9;border-top:1px solid #d0d0d0"></div>
<svg class="a" style="left:22px;top:566px" width="5" height="7"><path d="M4.5 0 L4.5 7 L0 3.5Z" fill="#555"/></svg>
<svg class="a" style="left:45px;top:566px" width="5" height="7"><path d="M0 0 L0 7 L4.5 3.5Z" fill="#555"/></svg>
<div class="t" style="left:63px;top:565px;font-size:10px;color:#555;letter-spacing:0.5px">...</div>
<div class="a" style="left:79.5px;top:559px;width:42.5px;height:19.5px;background:#fff"></div>
<div class="a" style="left:80px;top:575.5px;width:42px;height:2px;background:#3a8360"></div>
<div class="t" style="left:88.5px;top:565.3px;font-size:10px;font-weight:bold;color:#3a8360;letter-spacing:-0.55px">Sales</div>
<div class="t" style="left:131.5px;top:564.8px;font-size:10.5px;color:#555;letter-spacing:-0.2px">Workers</div>
<div class="a" style="left:122px;top:559px;width:1px;height:20px;background:#d0d0d0"></div>
<div class="a" style="left:480px;top:565px;width:258px;height:10px;background:#fff;border:1px solid #e0e0e0"></div>
<div class="a" style="left:766px;top:564.5px;width:10.5px;height:11px;background:#fff;border:1px solid #d6d6d6"></div>
<svg class="a" style="left:769.5px;top:567px" width="4" height="6"><path d="M0 0 L0 6 L4 3Z" fill="#666"/></svg>
<div class="a" style="left:2px;top:580px;width:792px;height:17px;background:#f3f3f3;border-top:1px solid #d8d8d8"></div>
<div class="t" style="left:8px;top:585px;font-size:9.5px;color:#555;letter-spacing:-0.55px">Ready</div>
<div class="a" style="left:562px;top:581px;width:29px;height:16px;background:#d3d3d3"></div>
<svg class="a" style="left:570px;top:583px" width="13" height="12"><g fill="none" stroke="#444" stroke-width="1"><rect x="0.5" y="0.5" width="12" height="11"/><path d="M4.5 0.5V11.5M8.5 0.5V11.5M0.5 4.5H12.5M0.5 8H12.5"/></g></svg>
<svg class="a" style="left:601px;top:583px" width="12" height="12"><g fill="none" stroke="#555" stroke-width="1"><rect x="0.5" y="0.5" width="11" height="11"/><rect x="3" y="2.5" width="6" height="7"/></g></svg>
<svg class="a" style="left:632px;top:583px" width="12" height="12"><g fill="none" stroke="#555" stroke-width="1"><path d="M0.5 0.5H11.5V11.5H0.5Z M3.5 0.5V5.5H8.5V0.5"/></g></svg>
<div class="a" style="left:658px;top:589px;width:6px;height:1px;background:#444"></div>
<div class="a" style="left:670px;top:589px;width:75px;height:1px;background:#999"></div>
<div class="a" style="left:705.5px;top:585px;width:3.5px;height:9px;background:#777"></div>
<div class="a" style="left:749px;top:589px;width:7px;height:1px;background:#444"></div>
<div class="a" style="left:752px;top:586px;width:1px;height:7px;background:#444"></div>
<div class="t" style="left:767px;top:585.5px;font-size:9.5px;color:#555;letter-spacing:-0.7px">100%</div>
<div class="a" style="left:2px;top:596.5px;width:37px;height:1.5px;background:#1a1a1a"></div>
<div class="a" style="left:39px;top:596.5px;width:140px;height:1.5px;background:#d8d8d8"></div>
<div class="a" style="left:555px;top:596.5px;width:239px;height:1.5px;background:#1a1a1a"></div>
<div class="a" style="left:796px;top:0;width:2px;height:600px;background:#1a1a1a"></div>
<div class="a" style="left:0;top:0;width:798px;height:1.3px;background:#1a1a1a"></div>
<div class="a" style="left:172.5px;top:511px;width:384px;height:86px;background:#fff;border-radius:5px;box-shadow:0 1px 3px 1px rgba(0,0,0,0.35);overflow:hidden"><div style="position:absolute;left:0;top:0;width:100%;height:23px;background:#099fcd"></div><div class="t" style="left:0;width:100%;top:517px;top:6px;text-align:center;font-size:14px;font-weight:bold;color:#fff">Task Instructions</div><div class="t" style="left:10.5px;top:32.2px;font-size:10.1px;color:#3d3d3d">Create a clustered column chart based on the selected data.</div></div>
<div class="t" style="left:19px;top:12.5px;font-size:9.3px;color:#cfe9d8;letter-spacing:-0.25px">AutoSave</div>
<div class="a" style="left:63px;top:10px;width:30px;height:12.5px;background:#fff;border-radius:7px"></div>
<div class="t" style="left:68px;top:12.5px;font-size:8.5px;color:#333;">On</div>
<div class="a" style="left:84px;top:13px;width:6.5px;height:6.5px;background:#1e4d33;border-radius:50%"></div>
<svg class="a" style="left:103px;top:10px" width="15" height="14" viewBox="0 0 15 14"><g fill="none" stroke="#dcefe2" stroke-width="1.4"><path d="M6.5 13H1.2V1.2H11.5L12.8 2.5V6.5"/><path d="M4 1.2V5.2H9.5V1.2"/><path d="M3.8 8.5V13"/></g><g fill="none" stroke="#dcefe2" stroke-width="1.3"><path d="M8.3 10A2.6 2.6 0 0 1 13.2 9.2M13.6 11.5A2.6 2.6 0 0 1 8.7 12.3"/><path d="M13.4 7.6V9.6H11.4M8.5 13.9V11.9H10.5"/></g></svg>
<svg class="a" style="left:126px;top:11px" width="14" height="14" viewBox="0 0 14 14"><g fill="none" stroke="#dcefe2" stroke-width="1.5"><path d="M2 1V5.8H6.8"/><path d="M2.4 5.6A4.8 4.8 0 1 1 6.2 13.2"/></g></svg>
<svg class="a" style="left:142.5px;top:16px" width="6" height="4" viewBox="0 0 6 4"><path d="M0.5 0.5 L3 3 L5.5 0.5" fill="none" stroke="#dcefe2" stroke-width="1.1"/></svg>
<div class="t" style="left:159.5px;top:12.2px;font-size:10.5px;color:#dcefe2;font-weight:bold">&raquo;</div>
<div class="t" style="left:207.5px;top:11.5px;font-size:9px;color:#d8eedf;letter-spacing:-0.2px">YSO</div>
<div class="t" style="left:229.5px;top:11.5px;font-size:9px;color:#d8eedf;">-</div>
<div class="t" style="left:238px;top:11.5px;font-size:9px;color:#d8eedf;letter-spacing:-0.3px">Saved</div>
<svg class="a" style="left:266.5px;top:15.5px" width="4" height="3" viewBox="0 0 4 3"><path d="M0 0H4L2 2.5Z" fill="#d8eedf"/></svg>
<div class="a" style="left:307.5px;top:8.5px;width:212.5px;height:17px;background:#a4d4b3;border-radius:1px"></div>
<div class="t" style="left:345.5px;top:13px;font-size:9.5px;color:#2f5a40;letter-spacing:-0.6px">Search</div>
<svg class="a" style="left:322px;top:11px" width="12" height="12" viewBox="0 0 12 12"><g fill="none" stroke="#3f6e51" stroke-width="1.2"><circle cx="7" cy="5" r="3.6"/><path d="M4.4 7.6 L1 11"/></g></svg>
<svg class="a" style="left:663px;top:12px" width="12" height="8" viewBox="0 0 12 8"><g fill="none" stroke="#e0f0e6" stroke-width="1.1"><rect x="0.6" y="0.6" width="10.8" height="6.8"/><path d="M0.6 2.8H11.4M6 2.8V7.4"/></g></svg>
<div class="a" style="left:700.5px;top:15.8px;width:8.5px;height:1.2px;background:#e0f0e6"></div>
<svg class="a" style="left:736px;top:12px" width="9" height="9" viewBox="0 0 9 9"><g fill="none" stroke="#e0f0e6" stroke-width="1.1"><rect x="0.6" y="2.4" width="6" height="6"/><path d="M2.4 2.4V0.6H8.4V6.6H6.6"/></g></svg>
<svg class="a" style="left:771.5px;top:12px" width="9" height="9" viewBox="0 0 9 9"><g fill="none" stroke="#e0f0e6" stroke-width="1.2"><path d="M0.6 0.6L8.4 8.4M8.4 0.6L0.6 8.4"/></g></svg>
<div class="t" style="left:14.5px;top:37.6px;font-size:9.6px;color:#505050;letter-spacing:0px">File</div>
<div class="t" style="left:54px;top:37.6px;font-size:9.8px;color:#505050;letter-spacing:0.5px">Home</div>
<div class="t" style="left:104px;top:37.6px;font-size:9.8px;color:#505050;letter-spacing:0.3px">Insert</div>
<div class="t" style="left:152.5px;top:37.6px;font-size:9.8px;color:#505050;letter-spacing:0.1px">Page Layout</div>
<div class="t" style="left:231px;top:37.6px;font-size:9.8px;color:#505050;letter-spacing:0.2px">Formulas</div>
<div class="t" style="left:294px;top:37.6px;font-size:9.8px;color:#505050;letter-spacing:0.2px">Data</div>
<div class="t" style="left:338px;top:37.6px;font-size:9.8px;color:#505050;letter-spacing:-0.1px">Review</div>
<div class="t" style="left:390px;top:37.6px;font-size:9.8px;color:#505050;letter-spacing:0.2px">View</div>
<div class="t" style="left:433px;top:37.6px;font-size:9.8px;color:#505050;letter-spacing:0.15px">Help</div>
<div class="a" style="left:54px;top:49px;width:29.5px;height:2.2px;background:#217346;border-radius:1px"></div>
<div class="a" style="left:649px;top:33.5px;width:51.5px;height:16.5px;background:#fbfbfb;border-radius:2px;box-shadow:0 0 0 0.5px #e6e6e6"></div>
<svg class="a" style="left:654px;top:37px" width="10" height="9" viewBox="0 0 10 9"><g fill="none" stroke="#666" stroke-width="1"><path d="M0.5 3.5V8.5H8.5V6"/><path d="M2.5 6.5C3 4 5 3 7.5 3M6 1L8.5 3L6 5"/></g></svg>
<div class="t" style="left:667px;top:37.5px;font-size:9.5px;color:#555;letter-spacing:0.2px">Share</div>
<div class="a" style="left:707.5px;top:33.5px;width:75px;height:16.5px;background:#fbfbfb;border-radius:2px;box-shadow:0 0 0 0.5px #e6e6e6"></div>
<svg class="a" style="left:713px;top:37px" width="10" height="9" viewBox="0 0 10 9"><g fill="none" stroke="#666" stroke-width="1"><path d="M0.5 0.5H9.5V6.5H3.5L1.5 8.5V6.5H0.5Z"/></g></svg>
<div class="t" style="left:726px;top:37.5px;font-size:9.5px;color:#555;letter-spacing:0.35px">Comments</div>
<div class="a" style="left:75px;top:56px;width:1px;height:69px;background:#cfcfcf"></div>
<div class="a" style="left:250px;top:56px;width:1px;height:69px;background:#cfcfcf"></div>
<div class="a" style="left:345.5px;top:56px;width:1px;height:69px;background:#cfcfcf"></div>
<div class="a" style="left:420.5px;top:56px;width:1px;height:69px;background:#cfcfcf"></div>
<div class="a" style="left:559.5px;top:56px;width:1px;height:69px;background:#cfcfcf"></div>
<div class="a" style="left:632.5px;top:56px;width:1px;height:69px;background:#cfcfcf"></div>
<div class="a" style="left:701px;top:56px;width:1px;height:69px;background:#cfcfcf"></div>
<div class="a" style="left:746px;top:56px;width:1px;height:69px;background:#cfcfcf"></div>
<div class="t" style="left:12.5px;top:117.5px;font-size:9px;color:#5a5a5a;letter-spacing:-0.05px">Clipboard</div>
<div class="t" style="left:146.5px;top:117.5px;font-size:9px;color:#5a5a5a;letter-spacing:0.19999999999999998px">Font</div>
<div class="t" style="left:271px;top:117.5px;font-size:9px;color:#5a5a5a;letter-spacing:0.0px">Alignment</div>
<div class="t" style="left:360.5px;top:117.5px;font-size:9px;color:#5a5a5a;letter-spacing:0.1px">Number</div>
<div class="t" style="left:479px;top:117.5px;font-size:9px;color:#5a5a5a;letter-spacing:-0.35px">Styles</div>
<div class="t" style="left:587px;top:117.5px;font-size:9px;color:#5a5a5a;letter-spacing:-0.55px">Cells</div>
<div class="t" style="left:653px;top:117.5px;font-size:9px;color:#5a5a5a;letter-spacing:0.0px">Editing</div>
<div class="t" style="left:714px;top:117.5px;font-size:9px;color:#5a5a5a;letter-spacing:-0.44999999999999996px">Ideas</div>
<svg class="a" style="left:66px;top:117.5px" width="7" height="7" viewBox="0 0 7 7"><path d="M0.5 6.5V0.5H6.5V2" fill="none" stroke="#777" stroke-width="0.9"/><path d="M2.5 2.5L6.5 6.5M6.5 4V6.5H4" fill="none" stroke="#777" stroke-width="0.9"/></svg>
<svg class="a" style="left:241px;top:117.5px" width="7" height="7" viewBox="0 0 7 7"><path d="M0.5 6.5V0.5H6.5V2" fill="none" stroke="#777" stroke-width="0.9"/><path d="M2.5 2.5L6.5 6.5M6.5 4V6.5H4" fill="none" stroke="#777" stroke-width="0.9"/></svg>
<svg class="a" style="left:336.5px;top:117.5px" width="7" height="7" viewBox="0 0 7 7"><path d="M0.5 6.5V0.5H6.5V2" fill="none" stroke="#777" stroke-width="0.9"/><path d="M2.5 2.5L6.5 6.5M6.5 4V6.5H4" fill="none" stroke="#777" stroke-width="0.9"/></svg>
<svg class="a" style="left:411px;top:117.5px" width="7" height="7" viewBox="0 0 7 7"><path d="M0.5 6.5V0.5H6.5V2" fill="none" stroke="#777" stroke-width="0.9"/><path d="M2.5 2.5L6.5 6.5M6.5 4V6.5H4" fill="none" stroke="#777" stroke-width="0.9"/></svg>
<svg class="a" style="left:779px;top:121px" width="9" height="5" viewBox="0 0 9 5"><path d="M0.5 4.5L4.5 0.8L8.5 4.5" fill="none" stroke="#555" stroke-width="1.1"/></svg>
<svg class="a" style="left:14px;top:58px" width="24" height="26" viewBox="0 0 24 26"><path d="M1.5 5.5H5V4H13V5.5H16.5V22.5H1.5Z" fill="#fbeed0" stroke="#e3b45a" stroke-width="1.3"/>
      <path d="M5 5.5L9 1.5L13 5.5V7H5Z" fill="#fff" stroke="#888" stroke-width="1"/>
      <rect x="11.5" y="10.5" width="10" height="14" fill="#fdfdfd" stroke="#777" stroke-width="1.2"/></svg>
<div class="t" style="left:13.5px;top:86.5px;font-size:8.8px;color:#555;letter-spacing:0px">Paste</div>
<svg class="a" style="left:21px;top:101.5px" width="6" height="4" viewBox="0 0 6 4"><path d="M0.5 0.5 L3 3 L5.5 0.5" fill="none" stroke="#555" stroke-width="1.1"/></svg>
<svg class="a" style="left:44px;top:58px" width="11" height="14" viewBox="0 0 11 14"><g fill="none" stroke="#666" stroke-width="0.9"><path d="M3 0.5L6.5 8M8 0.5L4.5 8"/></g><path d="M4.3 8.5L2 12.5H5Z M6.7 8.5L9 12.5H6Z" fill="#8cc4ee" stroke="#3f95d8" stroke-width="0.9"/></svg>
<svg class="a" style="left:41.5px;top:76.5px" width="14" height="14" viewBox="0 0 14 14"><g fill="none" stroke="#555" stroke-width="1.1"><path d="M5 2.5V0.8H1V9.5H3.5"/><path d="M3.5 2.5H9.5L12.5 5.5V13H3.5Z"/><path d="M6 8.5H10"/></g></svg>
<svg class="a" style="left:59.5px;top:82.5px" width="6" height="4" viewBox="0 0 6 4"><path d="M0.5 0.5 L3 3 L5.5 0.5" fill="none" stroke="#666" stroke-width="1.1"/></svg>
<svg class="a" style="left:42px;top:94.5px" width="14" height="13" viewBox="0 0 14 13"><path d="M1 6L6 4L9 8L5 12Z" fill="#f2c34a" stroke="#d49b20" stroke-width="0.8"/><path d="M6.5 5L12 0.8L13 2L8.5 7" fill="#8a75b8" stroke="#6c5a98" stroke-width="0.8"/></svg>
<div class="a" style="left:82.5px;top:63px;width:94px;height:17.5px;background:#fff;border:1px solid #dadada"></div>
<div class="t" style="left:84.7px;top:68.5px;font-size:9.5px;color:#333;letter-spacing:-0.35px">Calibri</div>
<svg class="a" style="left:167.5px;top:70.5px" width="6" height="4" viewBox="0 0 6 4"><path d="M0.5 0.5 L3 3 L5.5 0.5" fill="none" stroke="#555" stroke-width="1.1"/></svg>
<div class="a" style="left:177.5px;top:63px;width:32.5px;height:17.5px;background:#fff;border:1px solid #dadada"></div>
<div class="t" style="left:180px;top:68.5px;font-size:9.5px;color:#333;letter-spacing:-0.8px">11</div>
<svg class="a" style="left:202.5px;top:70.5px" width="6" height="4" viewBox="0 0 6 4"><path d="M0.5 0.5 L3 3 L5.5 0.5" fill="none" stroke="#555" stroke-width="1.1"/></svg>
<div class="t" style="left:213px;top:64px;font-size:12.5px;color:#555;">A</div>
<svg class="a" style="left:221.5px;top:63px" width="5" height="4" viewBox="0 0 5 4"><path d="M0.5 3.5L2.5 1L4.5 3.5" fill="none" stroke="#666" stroke-width="0.9"/></svg>
<div class="t" style="left:232px;top:66px;font-size:10.5px;color:#555;">A</div>
<svg class="a" style="left:239px;top:63.5px" width="5" height="4" viewBox="0 0 5 4"><path d="M0.5 0.5L2.5 3L4.5 0.5" fill="none" stroke="#666" stroke-width="0.9"/></svg>
<div class="t" style="left:87.5px;top:90.5px;font-size:10px;color:#555;font-weight:bold">B</div>
<div class="t" style="left:105px;top:90.5px;font-size:10.5px;color:#555;font-style:italic;font-family:&quot;Liberation Serif&quot;">I</div>
<div class="t" style="left:121.5px;top:90px;font-size:9.8px;color:#555;">U</div>
<div class="a" style="left:121px;top:100.5px;width:8px;height:1px;background:#444"></div>
<svg class="a" style="left:134.5px;top:95px" width="6" height="4" viewBox="0 0 6 4"><path d="M0.5 0.5 L3 3 L5.5 0.5" fill="none" stroke="#555" stroke-width="1.1"/></svg>
<div class="a" style="left:148px;top:89px;width:1px;height:15px;background:#cfcfcf"></div>
<svg class="a" style="left:153.5px;top:89px" width="13" height="13" viewBox="0 0 13 13"><g fill="none" stroke="#999" stroke-width="1" stroke-dasharray="1.5 1"><rect x="0.5" y="0.5" width="12" height="12"/><path d="M6.5 0.5V12.5M0.5 6.5H12.5"/></g><path d="M0.5 12.5H12.5" stroke="#444" stroke-width="1.2"/></svg>
<svg class="a" style="left:171.5px;top:95px" width="6" height="4" viewBox="0 0 6 4"><path d="M0.5 0.5 L3 3 L5.5 0.5" fill="none" stroke="#555" stroke-width="1.1"/></svg>
<div class="a" style="left:184px;top:89px;width:1px;height:15px;background:#cfcfcf"></div>
<svg class="a" style="left:190.5px;top:88.5px" width="12" height="11" viewBox="0 0 12 11"><path d="M5 0.5L10 5.5L5.5 10L0.8 5.5Z" fill="#fff" stroke="#555" stroke-width="1"/><path d="M10 6C11 7.5 11.5 8.5 10.5 9" stroke="#555" fill="none"/></svg>
<div class="a" style="left:188.5px;top:98.5px;width:14.5px;height:3px;background:#f0ec1a"></div>
<svg class="a" style="left:207px;top:95px" width="6" height="4" viewBox="0 0 6 4"><path d="M0.5 0.5 L3 3 L5.5 0.5" fill="none" stroke="#555" stroke-width="1.1"/></svg>
<div class="t" style="left:220.5px;top:88.5px;font-size:10.5px;color:#555;">A</div>
<div class="a" style="left:218px;top:98.5px;width:12.5px;height:3px;background:#d8141a"></div>
<svg class="a" style="left:236px;top:95px" width="6" height="4" viewBox="0 0 6 4"><path d="M0.5 0.5 L3 3 L5.5 0.5" fill="none" stroke="#555" stroke-width="1.1"/></svg>
<div class="a" style="left:291px;top:56px;width:17px;height:17px;background:#d9d9d9"></div>
<div class="a" style="left:260px;top:58.5px;width:11px;height:1px;background:#6a6a6a"></div>
<div class="a" style="left:261px;top:61.5px;width:9px;height:1px;background:#6a6a6a"></div>
<div class="a" style="left:260px;top:64.5px;width:11px;height:1px;background:#6a6a6a"></div>
<div class="a" style="left:276.5px;top:60.5px;width:11px;height:1px;background:#6a6a6a"></div>
<div class="a" style="left:277.5px;top:63.5px;width:9px;height:1px;background:#6a6a6a"></div>
<div class="a" style="left:276.5px;top:66.5px;width:11px;height:1px;background:#6a6a6a"></div>
<div class="a" style="left:293.5px;top:63.5px;width:11px;height:1px;background:#6a6a6a"></div>
<div class="a" style="left:294.5px;top:66.5px;width:9px;height:1px;background:#6a6a6a"></div>
<div class="a" style="left:293.5px;top:69.5px;width:11px;height:1px;background:#6a6a6a"></div>
<div class="t" style="left:314.5px;top:57.5px;font-size:8.5px;color:#555;line-height:0.8">ab</div>
<div class="t" style="left:314px;top:64.5px;font-size:8.5px;color:#555;">c</div>
<svg class="a" style="left:318.5px;top:65px" width="8" height="7" viewBox="0 0 8 7"><path d="M6.5 0.5V3.5H1.5M3.5 1.5L1.5 3.5L3.5 5.5" fill="none" stroke="#2f8fd8" stroke-width="1.1"/></svg>
<div class="a" style="left:260px;top:77.5px;width:11px;height:1px;background:#6a6a6a"></div>
<div class="a" style="left:260px;top:80.5px;width:8px;height:1px;background:#6a6a6a"></div>
<div class="a" style="left:260px;top:83.5px;width:11px;height:1px;background:#6a6a6a"></div>
<div class="a" style="left:260px;top:86.5px;width:8px;height:1px;background:#6a6a6a"></div>
<div class="a" style="left:277px;top:77.5px;width:11px;height:1px;background:#6a6a6a"></div>
<div class="a" style="left:279px;top:80.5px;width:7px;height:1px;background:#6a6a6a"></div>
<div class="a" style="left:277px;top:83.5px;width:11px;height:1px;background:#6a6a6a"></div>
<div class="a" style="left:279px;top:86.5px;width:7px;height:1px;background:#6a6a6a"></div>
<div class="a" style="left:293.5px;top:77.5px;width:11px;height:1px;background:#6a6a6a"></div>
<div class="a" style="left:296.5px;top:80.5px;width:8px;height:1px;background:#6a6a6a"></div>
<div class="a" style="left:293.5px;top:83.5px;width:11px;height:1px;background:#6a6a6a"></div>
<div class="a" style="left:296.5px;top:86.5px;width:8px;height:1px;background:#6a6a6a"></div>
<svg class="a" style="left:311.5px;top:76.5px" width="13" height="13" viewBox="0 0 13 13"><rect x="0.5" y="0.5" width="12" height="12" fill="#fff" stroke="#3a7fc0" stroke-width="1"/><rect x="0.5" y="3.5" width="12" height="6" fill="#cfe4f7" stroke="#3a7fc0" stroke-width="1"/><path d="M2.5 6.5H10.5M4 5L2.5 6.5L4 8M9 5L10.5 6.5L9 8" fill="none" stroke="#2f8fd8" stroke-width="0.9"/></svg>
<svg class="a" style="left:330px;top:81.5px" width="6" height="4" viewBox="0 0 6 4"><path d="M0.5 0.5 L3 3 L5.5 0.5" fill="none" stroke="#555" stroke-width="1.1"/></svg>
<div class="a" style="left:260px;top:95.5px;width:11px;height:1px;background:#6a6a6a"></div>
<div class="a" style="left:265px;top:98.5px;width:6px;height:1px;background:#6a6a6a"></div>
<div class="a" style="left:265px;top:101.5px;width:6px;height:1px;background:#6a6a6a"></div>
<div class="a" style="left:260px;top:104.5px;width:11px;height:1px;background:#6a6a6a"></div>
<svg class="a" style="left:260px;top:97px" width="4" height="5" viewBox="0 0 4 5"><path d="M3.5 0.5L0.5 2.5L3.5 4.5" fill="none" stroke="#2ba37a" stroke-width="1"/></svg>
<div class="a" style="left:277px;top:95.5px;width:11px;height:1px;background:#6a6a6a"></div>
<div class="a" style="left:282px;top:98.5px;width:6px;height:1px;background:#6a6a6a"></div>
<div class="a" style="left:282px;top:101.5px;width:6px;height:1px;background:#6a6a6a"></div>
<div class="a" style="left:277px;top:104.5px;width:11px;height:1px;background:#6a6a6a"></div>
<svg class="a" style="left:277px;top:97px" width="4" height="5" viewBox="0 0 4 5"><path d="M0.5 0.5L3.5 2.5L0.5 4.5" fill="none" stroke="#2f8fd8" stroke-width="1"/></svg>
<div class="a" style="left:296px;top:93px;width:1px;height:14px;background:#cfcfcf"></div>
<div class="t" style="left:300px;top:94.5px;font-size:7px;color:#555;transform:rotate(-30deg)">ab</div>
<svg class="a" style="left:303px;top:97px" width="10" height="10" viewBox="0 0 10 10"><path d="M0.5 9.5L8.5 1.5M5.5 1.5H8.5V4.5" fill="none" stroke="#2f8fd8" stroke-width="1.1"/></svg>
<svg class="a" style="left:316px;top:99px" width="6" height="4" viewBox="0 0 6 4"><path d="M0.5 0.5 L3 3 L5.5 0.5" fill="none" stroke="#555" stroke-width="1.1"/></svg>
<div class="a" style="left:352px;top:57px;width:62px;height:17px;background:#fff;border:1px solid #dadada"></div>
<div class="t" style="left:354.8px;top:62px;font-size:9.3px;color:#333;letter-spacing:-0.45px">General</div>
<svg class="a" style="left:406.5px;top:64.5px" width="6" height="4" viewBox="0 0 6 4"><path d="M0.5 0.5 L3 3 L5.5 0.5" fill="none" stroke="#555" stroke-width="1.1"/></svg>
<div class="t" style="left:356.5px;top:77.5px;font-size:12.5px;color:#555;">$</div>
<svg class="a" style="left:371.5px;top:83px" width="6" height="4" viewBox="0 0 6 4"><path d="M0.5 0.5 L3 3 L5.5 0.5" fill="none" stroke="#555" stroke-width="1.1"/></svg>
<div class="t" style="left:382px;top:77.5px;font-size:13px;color:#555;">%</div>
<svg class="a" style="left:403.5px;top:79.5px" width="6" height="10" viewBox="0 0 6 10"><circle cx="3" cy="3" r="2.6" fill="#3d3d3d"/><path d="M5.4 3.2C5.6 6 4 8.3 1.2 9.5L0.8 8.6C2.6 7.6 3.4 6.2 3.3 4.8Z" fill="#3d3d3d"/></svg>
<div class="t" style="left:361px;top:95px;font-size:7.5px;color:#555;">0</div>
<div class="t" style="left:355.5px;top:101px;font-size:7.5px;color:#555;letter-spacing:-0.3px">.00</div>
<svg class="a" style="left:353.5px;top:96px" width="8" height="6" viewBox="0 0 8 6"><path d="M7.5 3H1M3 1L1 3L3 5" fill="none" stroke="#2f8fd8" stroke-width="1.1"/></svg>
<div class="t" style="left:373px;top:95px;font-size:7.5px;color:#555;letter-spacing:-0.3px">.00</div>
<div class="t" style="left:379px;top:101px;font-size:7.5px;color:#555;">0</div>
<svg class="a" style="left:370.5px;top:101px" width="9" height="6" viewBox="0 0 9 6"><path d="M0.5 3H7.5M5.5 1L7.5 3L5.5 5" fill="none" stroke="#2f8fd8" stroke-width="1.1"/></svg>
<svg class="a" style="left:429px;top:58.5px" width="13" height="11.5" viewBox="0 0 13 11.5"><rect x="0.5" y="0.5" width="12" height="10.5" fill="#fff" stroke="#666" stroke-width="1"/><rect x="1" y="1" width="11" height="3" fill="#e05060"/><rect x="1" y="7.5" width="11" height="3" fill="#e05060"/><path d="M0.5 4H12.5M0.5 7.5H12.5M4.5 0.5V11" stroke="#666" stroke-width="0.8"/></svg>
<div class="t" style="left:444px;top:60.8px;font-size:9.3px;color:#555;letter-spacing:0.08px">Conditional Formatting</div>
<svg class="a" style="left:541.5px;top:63.5px" width="6" height="4" viewBox="0 0 6 4"><path d="M0.5 0.5 L3 3 L5.5 0.5" fill="none" stroke="#555" stroke-width="1.1"/></svg>
<svg class="a" style="left:429px;top:76.5px" width="13" height="11.5" viewBox="0 0 13 11.5"><rect x="0.5" y="0.5" width="12" height="10.5" fill="#fff" stroke="#666" stroke-width="1"/><rect x="1" y="1" width="11" height="2.5" fill="#a9cdea"/><path d="M0.5 3.5H12.5M0.5 7H12.5M4.5 0.5V11M8.5 0.5V11" stroke="#777" stroke-width="0.8"/><path d="M4 10L11 3" stroke="#2f8fd8" stroke-width="1.6"/></svg>
<div class="t" style="left:444px;top:78.8px;font-size:9.3px;color:#555;letter-spacing:-0.38px">Format as Table</div>
<svg class="a" style="left:509px;top:81.5px" width="6" height="4" viewBox="0 0 6 4"><path d="M0.5 0.5 L3 3 L5.5 0.5" fill="none" stroke="#555" stroke-width="1.1"/></svg>
<svg class="a" style="left:429px;top:94px" width="13" height="11.5" viewBox="0 0 13 11.5"><rect x="0.5" y="0.5" width="12" height="10.5" fill="#cfe4f7" stroke="#666" stroke-width="1"/><path d="M3 9.5L11 2" stroke="#2f8fd8" stroke-width="1.8"/></svg>
<div class="t" style="left:444px;top:96.3px;font-size:9.3px;color:#555;letter-spacing:-0.3px">Cell Styles</div>
<svg class="a" style="left:487.5px;top:99px" width="6" height="4" viewBox="0 0 6 4"><path d="M0.5 0.5 L3 3 L5.5 0.5" fill="none" stroke="#555" stroke-width="1.1"/></svg>
<svg class="a" style="left:568px;top:58.5px" width="13" height="11" viewBox="0 0 13 11"><rect x="0.5" y="0.5" width="12" height="10" fill="#fff" stroke="#666" stroke-width="1"/><rect x="1" y="3.5" width="11" height="4" fill="#9fc8ea"/><path d="M0.5 3.5H12.5M0.5 7.5H12.5M4.5 0.5V10.5M8.5 0.5V10.5" stroke="#666" stroke-width="0.8"/></svg>
<div class="t" style="left:583px;top:60.8px;font-size:9.3px;color:#555;letter-spacing:-0.15px">Insert</div>
<svg class="a" style="left:612.5px;top:63.5px" width="6" height="4" viewBox="0 0 6 4"><path d="M0.5 0.5 L3 3 L5.5 0.5" fill="none" stroke="#555" stroke-width="1.1"/></svg>
<svg class="a" style="left:568px;top:76px" width="13" height="11" viewBox="0 0 13 11"><rect x="0.5" y="0.5" width="12" height="10" fill="#fff" stroke="#666" stroke-width="1"/><rect x="1" y="3.5" width="7" height="4" fill="#9fc8ea"/><path d="M0.5 3.5H12.5M0.5 7.5H12.5M4.5 0.5V10.5" stroke="#666" stroke-width="0.8"/><path d="M9 4L12 7M12 4L9 7" stroke="#d8323a" stroke-width="1"/></svg>
<div class="t" style="left:583px;top:78.8px;font-size:9.3px;color:#555;letter-spacing:-0.25px">Delete</div>
<svg class="a" style="left:616px;top:81.5px" width="6" height="4" viewBox="0 0 6 4"><path d="M0.5 0.5 L3 3 L5.5 0.5" fill="none" stroke="#555" stroke-width="1.1"/></svg>
<svg class="a" style="left:568px;top:93.5px" width="13" height="12" viewBox="0 0 13 12"><rect x="0.5" y="0.5" width="12" height="11" fill="#fff" stroke="#666" stroke-width="1"/><rect x="1" y="3" width="11" height="6" fill="#9fc8ea"/><path d="M0.5 3H12.5M0.5 6H12.5M0.5 9H12.5M4.5 0.5V11.5M8.5 0.5V11.5" stroke="#666" stroke-width="0.8"/></svg>
<div class="t" style="left:583px;top:96.3px;font-size:9.3px;color:#555;letter-spacing:-0.15px">Format</div>
<svg class="a" style="left:614.5px;top:99px" width="6" height="4" viewBox="0 0 6 4"><path d="M0.5 0.5 L3 3 L5.5 0.5" fill="none" stroke="#555" stroke-width="1.1"/></svg>
<svg class="a" style="left:642px;top:58.5px" width="11" height="12" viewBox="0 0 11 12"><path d="M10 2.5V0.8H0.8L5.2 5.8L0.8 11H10V9.2" fill="none" stroke="#555" stroke-width="1.2" stroke-linejoin="miter"/></svg>
<svg class="a" style="left:657.5px;top:63.5px" width="6" height="4" viewBox="0 0 6 4"><path d="M0.5 0.5 L3 3 L5.5 0.5" fill="none" stroke="#666" stroke-width="1.1"/></svg>
<svg class="a" style="left:670px;top:57.5px" width="15" height="13" viewBox="0 0 15 13"><path d="M0.8 5.5L2.5 0.8L4.2 5.5M1.4 4H3.6" fill="none" stroke="#2ba37a" stroke-width="1"/><path d="M0.8 7H4.3L0.8 11.8H4.5" fill="none" stroke="#444" stroke-width="1.2"/><path d="M6 3.5H13.5L10.5 7.5V11.5L9 10.5V7.5Z" fill="none" stroke="#555" stroke-width="1.1"/></svg>
<svg class="a" style="left:686.5px;top:63.5px" width="6" height="4" viewBox="0 0 6 4"><path d="M0.5 0.5 L3 3 L5.5 0.5" fill="none" stroke="#666" stroke-width="1.1"/></svg>
<svg class="a" style="left:641px;top:76px" width="14" height="12.5" viewBox="0 0 14 12.5"><rect x="0.5" y="0.5" width="12.5" height="11.5" fill="#fff" stroke="#666" stroke-width="1"/><path d="M0.5 3H13" stroke="#666"/><path d="M6.8 4.5V9M4.8 7L6.8 9L8.8 7" fill="none" stroke="#2f8fd8" stroke-width="1.1"/></svg>
<svg class="a" style="left:657.5px;top:81.5px" width="6" height="4" viewBox="0 0 6 4"><path d="M0.5 0.5 L3 3 L5.5 0.5" fill="none" stroke="#666" stroke-width="1.1"/></svg>
<svg class="a" style="left:670.5px;top:76px" width="13" height="13" viewBox="0 0 13 13"><circle cx="8" cy="5" r="4" fill="none" stroke="#555" stroke-width="1.1"/><path d="M5.2 7.8L0.8 12.2" stroke="#555" stroke-width="1.2"/></svg>
<svg class="a" style="left:686.5px;top:81.5px" width="6" height="4" viewBox="0 0 6 4"><path d="M0.5 0.5 L3 3 L5.5 0.5" fill="none" stroke="#666" stroke-width="1.1"/></svg>
<svg class="a" style="left:641px;top:94px" width="13" height="12" viewBox="0 0 13 12"><path d="M1 7.5L7.5 1L12 5.5L5.5 11Z" fill="#f3d6f0" stroke="#b45cc0" stroke-width="1"/><path d="M1 7.5L4.2 4.3L8.7 8.8L5.5 11Z" fill="#c77bd0" stroke="#b45cc0" stroke-width="1"/></svg>
<svg class="a" style="left:657.5px;top:99px" width="6" height="4" viewBox="0 0 6 4"><path d="M0.5 0.5 L3 3 L5.5 0.5" fill="none" stroke="#666" stroke-width="1.1"/></svg>
<svg class="a" style="left:715px;top:59px" width="18" height="23" viewBox="0 0 18 23"><path d="M8 0.8H16.5L11.5 8.5H16L4.5 22L8 12H1.5Z" fill="#6fb4ee" stroke="#2f7fc8" stroke-width="1"/></svg>
<div class="t" style="left:714px;top:88px;font-size:9.3px;color:#555;letter-spacing:-0.5px">Ideas</div>
</body></html>
